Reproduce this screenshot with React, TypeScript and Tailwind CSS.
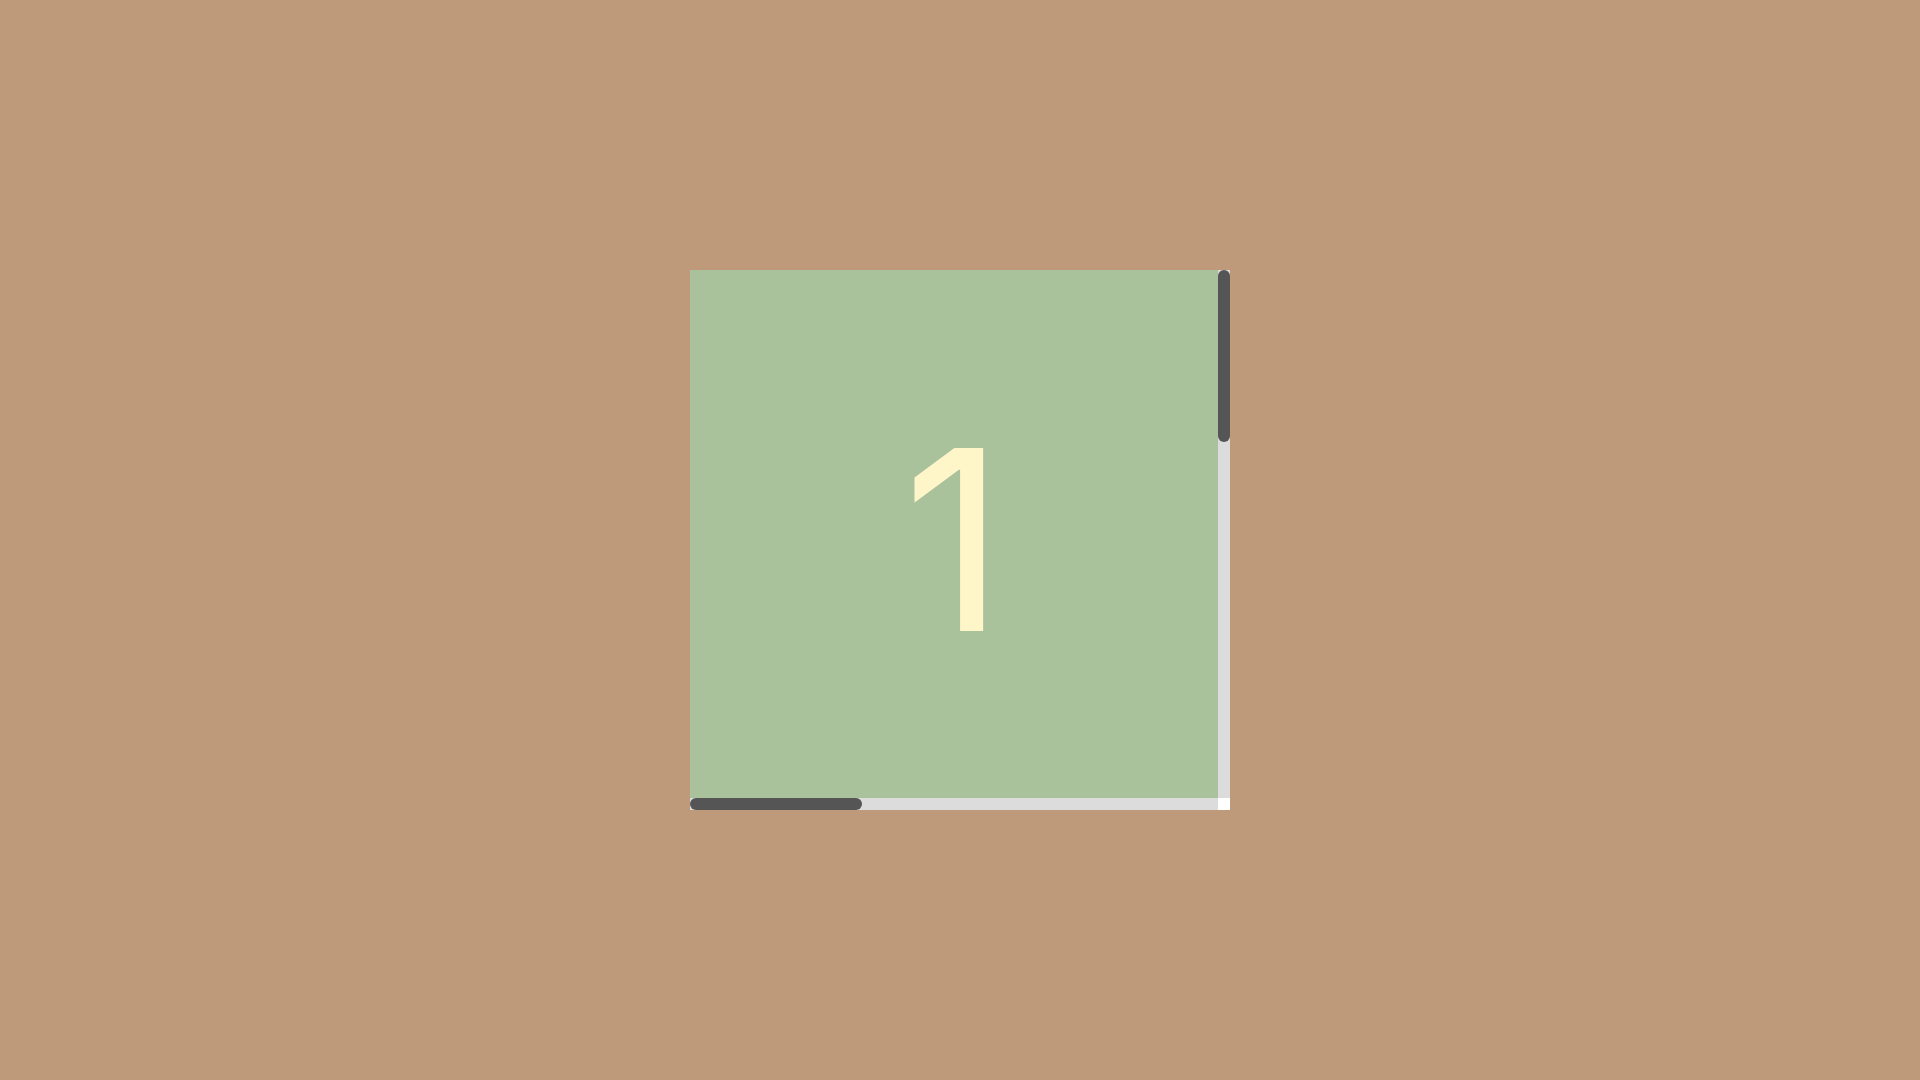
import React from 'react';

export default function App() {
  return (
    <div className="w-full h-screen bg-[#be9a7a] flex items-center justify-center">
      {/* Scroll box: viewport + drawn scrollbars */}
      <div className="w-[540px] h-[540px] flex flex-col bg-[#a9c29c]">
        <div className="flex flex-1 min-h-0">
          {/* Viewport */}
          <div className="flex-1 min-w-0 overflow-hidden">
            <div className="w-[540px] h-[540px] flex items-center justify-center pr-3 font-['Inter',sans-serif] text-[252px] leading-none text-[#fef5c8]">
              1
            </div>
          </div>
          {/* Vertical scrollbar */}
          <div className="w-3 bg-[#dcdcdc] flex flex-col">
            <div className="h-[172px] rounded-full bg-[#555555]" />
          </div>
        </div>
        {/* Horizontal scrollbar + corner */}
        <div className="h-3 flex">
          <div className="flex-1 bg-[#dcdcdc] flex">
            <div className="w-[172px] rounded-full bg-[#555555]" />
          </div>
          <div className="w-3 bg-white" />
        </div>
      </div>
    </div>
  );
}
